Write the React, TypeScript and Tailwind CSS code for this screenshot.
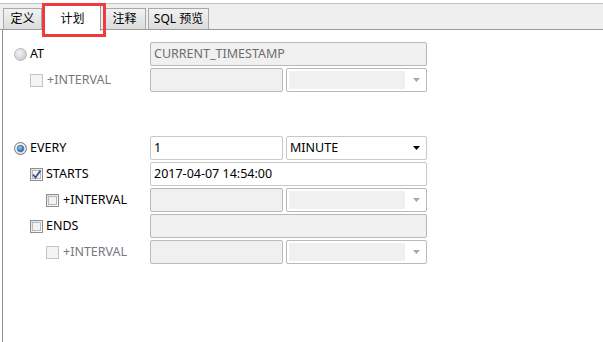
import React from "react";

const ui = { fontFamily: '"Noto Sans", "Noto Sans CJK SC", sans-serif' };

function Radio({ checked, disabled }: { checked?: boolean; disabled?: boolean }) {
  return (
    <svg width="13" height="13" viewBox="0 0 13 13" className="shrink-0">
      <defs>
        <radialGradient id={checked ? "rg1" : "rg0"} cx="0.4" cy="0.35" r="0.7">
          <stop offset="0" stopColor={disabled ? "#f4f4f4" : "#ffffff"} />
          <stop offset="1" stopColor={disabled ? "#c9c9c9" : "#d6d6d6"} />
        </radialGradient>
        <radialGradient id="dot" cx="0.4" cy="0.35" r="0.7">
          <stop offset="0" stopColor="#8fd3ff" />
          <stop offset="1" stopColor="#1b5fa8" />
        </radialGradient>
      </defs>
      <circle cx="6.5" cy="6.5" r="6" fill={`url(#${checked ? "rg1" : "rg0"})`} stroke={disabled ? "#b8b8b8" : "#7a7a7a"} />
      {checked && <circle cx="6.5" cy="6.5" r="3.2" fill="url(#dot)" stroke="#1c4f86" strokeWidth="0.6" />}
    </svg>
  );
}

function Check({ checked, disabled }: { checked?: boolean; disabled?: boolean }) {
  return (
    <span
      className={
        "relative flex h-[13px] w-[13px] shrink-0 items-center justify-center border " +
        (disabled ? "border-[#c4c4c4] bg-[#f4f4f4]" : "border-[#8e8f8f] bg-gradient-to-br from-[#dcdcdc] to-[#ffffff]")
      }
    >
      {!disabled && <span className="absolute inset-[1px] border border-[#b9b9b9] bg-[#f3f3f3]" />}
      {checked && (
        <svg width="11" height="11" viewBox="0 0 11 11" className="relative">
          <path d="M2 5.5 L4.5 8.5 L9.5 1.5" fill="none" stroke="#3c4f94" strokeWidth="1.8" />
        </svg>
      )}
    </span>
  );
}

function Field({ value, disabled, className = "" }: { value?: string; disabled?: boolean; className?: string }) {
  return (
    <div
      className={
        "flex h-[24px] items-center rounded-[2px] border px-[3px] text-[12.5px] " +
        (disabled ? "border-[#b9b9b9] bg-[#f0f0f0] text-[#6d6d6d] " : "border-[#c8c8c8] bg-white text-black ") +
        className
      }
    >
      {value}
    </div>
  );
}

function Select({ value, disabled }: { value?: string; disabled?: boolean }) {
  return (
    <div
      className={
        "flex h-[24px] w-[141px] items-center rounded-[2px] border pl-[2px] pr-[6px] text-[12.5px] " +
        (disabled ? "border-[#b9b9b9] bg-white" : "border-[#c8c8c8] bg-white text-black")
      }
    >
      {disabled ? <div className="h-[18px] flex-1 bg-[#f0f0f0]" /> : <span className="flex-1 pl-[1px]">{value}</span>}
      <svg width="7" height="4" viewBox="0 0 7 4" className="ml-[8px]">
        <path d="M0 0 H7 L3.5 4 Z" fill={disabled ? "#a8a8a8" : "#000"} />
      </svg>
    </div>
  );
}

function Label({ text, disabled }: { text: string; disabled?: boolean }) {
  return <span className={"text-[12.5px] " + (disabled ? "text-[#7e7480]" : "text-black")}>{text}</span>;
}

function Row({ left, children }: { left: React.ReactNode; children: React.ReactNode }) {
  return (
    <div className="flex h-[26px] items-center">
      <div className="flex w-[136px] items-center">{left}</div>
      <div className="flex w-[277px] gap-[3px]">{children}</div>
    </div>
  );
}

export default function App() {
  return (
    <div className="relative h-[342px] w-[603px] overflow-hidden bg-white" style={ui}>
      <div className="h-[4px] border-b border-[#c3c3c3]" />
      <div className="flex h-[26px] items-end gap-[2px] border-b border-[#9a9a9a] bg-[#efefef] pl-[3px]">
        <div className="flex h-[21px] w-[39px] items-center justify-center border border-b-0 border-[#a9a9a9] bg-gradient-to-b from-[#f2f2f2] to-[#dcdcdc] text-[12px]">
          定义
        </div>
        <div className="relative z-10 -mb-[2px] flex h-[27px] w-[57px] items-start justify-center border border-b-0 border-[#9a9a9a] bg-white pt-[5px] text-[12px]">
          计划
        </div>
        <div className="flex h-[21px] w-[43px] items-center justify-center border border-b-0 border-[#a9a9a9] bg-gradient-to-b from-[#f2f2f2] to-[#dcdcdc] text-[12px]">
          注释
        </div>
        <div className="flex h-[21px] w-[61px] items-center justify-center border border-b-0 border-[#a9a9a9] bg-gradient-to-b from-[#f2f2f2] to-[#dcdcdc] text-[12px]">
          SQL 预览
        </div>
      </div>
      <div className="absolute left-[42px] top-[3px] z-20 h-[34px] w-[64px] border-[3px] border-[#ef3b3b]" />
      <div className="ml-[2px] h-[312px] border-l border-[#8d8d8d] pl-[11px] pt-[11px]">
        <Row
          left={
            <div className="flex items-center gap-[3px]">
              <Radio disabled />
              <Label text="AT" />
            </div>
          }
        >
          <Field value="CURRENT_TIMESTAMP" disabled className="w-[277px]" />
        </Row>
        <Row
          left={
            <div className="flex items-center gap-[4px] pl-[16px]">
              <Check disabled />
              <Label text="+INTERVAL" disabled />
            </div>
          }
        >
          <Field disabled className="w-[133px]" />
          <Select disabled />
        </Row>
        <div className="h-[42px]" />
        <Row
          left={
            <div className="flex items-center gap-[3px]">
              <Radio checked />
              <Label text="EVERY" />
            </div>
          }
        >
          <Field value="1" className="w-[133px]" />
          <Select value="MINUTE" />
        </Row>
        <Row
          left={
            <div className="flex items-center gap-[3px] pl-[16px]">
              <Check checked />
              <Label text="STARTS" />
            </div>
          }
        >
          <Field value="2017-04-07 14:54:00" className="w-[277px]" />
        </Row>
        <Row
          left={
            <div className="flex items-center gap-[4px] pl-[32px]">
              <Check />
              <Label text="+INTERVAL" />
            </div>
          }
        >
          <Field disabled className="w-[133px]" />
          <Select disabled />
        </Row>
        <Row
          left={
            <div className="flex items-center gap-[3px] pl-[16px]">
              <Check />
              <Label text="ENDS" />
            </div>
          }
        >
          <Field disabled className="w-[277px]" />
        </Row>
        <Row
          left={
            <div className="flex items-center gap-[4px] pl-[32px]">
              <Check disabled />
              <Label text="+INTERVAL" disabled />
            </div>
          }
        >
          <Field disabled className="w-[133px]" />
          <Select disabled />
        </Row>
      </div>
    </div>
  );
}
